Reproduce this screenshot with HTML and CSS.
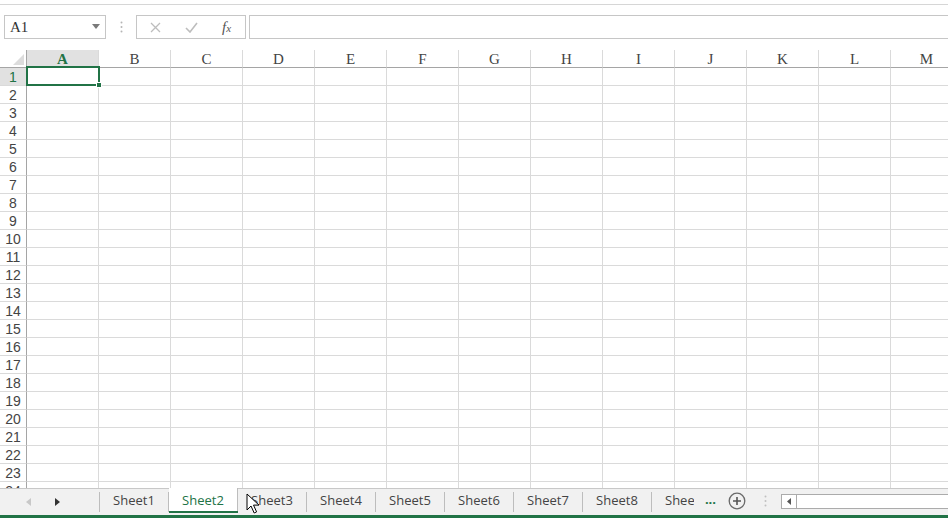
FILE: index.html
```html
<!DOCTYPE html>
<html lang="en">
<head>
  <meta charset="UTF-8">
  <title>Book1 - Sheet2</title>
  <link rel="stylesheet" href="styles.css">
</head>
<body>

  <div class="app">
    <div class="ribbon-edge"></div>

    <div class="formula-bar">
      <div class="name-box">
        <span>A1</span>
        <svg class="caret" width="8" height="5" viewBox="0 0 8 5"><path d="M0 0h8L4 5z" fill="#7a7a7a"/></svg>
      </div>
      <div class="grip">
        <svg width="3" height="12" viewBox="0 0 3 12"><circle cx="1.5" cy="1.5" r="1" fill="#b5b5b5"/><circle cx="1.5" cy="6" r="1" fill="#b5b5b5"/><circle cx="1.5" cy="10.5" r="1" fill="#b5b5b5"/></svg>
      </div>
      <div class="fx-buttons">
        <svg width="11" height="11" viewBox="0 0 11 11"><path d="M1 1l9 9M10 1l-9 9" stroke="#bdbdbd" stroke-width="1.3"/></svg>
        <svg width="13" height="11" viewBox="0 0 13 11"><path d="M1 6l4 4 7-9" stroke="#bdbdbd" stroke-width="1.6" fill="none"/></svg>
        <span class="fx">f<small>x</small></span>
      </div>
      <div class="formula-input"></div>
    </div>

    <div class="sheet">
      <div class="grid" id="grid"></div>
      <div class="selection"><span class="handle"></span></div>
    </div>

    <div class="tabs">
      <div class="tab-nav">
        <svg width="5" height="8" viewBox="0 0 5 8"><path d="M5 0v8L0 4z" fill="#c8c8c8"/></svg>
        <svg width="5" height="8" viewBox="0 0 5 8"><path d="M0 0v8l5-4z" fill="#333"/></svg>
      </div>
      <div class="tab">Sheet1</div>
      <div class="tab active">Sheet2</div>
      <div class="tab">Sheet3</div>
      <div class="tab">Sheet4</div>
      <div class="tab">Sheet5</div>
      <div class="tab">Sheet6</div>
      <div class="tab">Sheet7</div>
      <div class="tab">Sheet8</div>
      <div class="tab cut">Sheet9</div>
      <div class="more">...</div>
      <div class="add">
        <svg width="18" height="18" viewBox="0 0 18 18"><circle cx="9" cy="9" r="7.8" fill="none" stroke="#6a6a6a" stroke-width="1.3"/><path d="M9 5v8M5 9h8" stroke="#555" stroke-width="1.6"/></svg>
      </div>
      <div class="grip small">
        <svg width="3" height="12" viewBox="0 0 3 12"><circle cx="1.5" cy="1.5" r="1" fill="#c0c0c0"/><circle cx="1.5" cy="6" r="1" fill="#c0c0c0"/><circle cx="1.5" cy="10.5" r="1" fill="#c0c0c0"/></svg>
      </div>
      <div class="hscroll">
        <div class="scroll-btn">
          <svg width="4" height="7" viewBox="0 0 4 7"><path d="M4 0v7L0 3.5z" fill="#555"/></svg>
        </div>
        <div class="scroll-thumb"></div>
      </div>

      <svg class="pointer" width="13" height="22" viewBox="0 0 13 22"><path d="M1 1v16l4-4 3.2 7 2.4-1.1-3.1-6.8H13z" fill="#fff" stroke="#000" stroke-width="1" stroke-linejoin="round"/></svg>
    </div>

    <div class="status"></div>
  </div>

  <script>
    const cols = "ABCDEFGHIJKLM".split("");
    const grid = document.getElementById("grid");

    function addCell(cls, text) {
      const div = document.createElement("div");
      div.className = cls;
      if (text) div.textContent = text;
      grid.appendChild(div);
    }

    addCell("corner");
    cols.forEach((c, i) => addCell(i === 0 ? "col-head on" : "col-head", c));

    for (let r = 1; r <= 25; r++) {
      addCell(r === 1 ? "row-head on" : "row-head", String(r));
      cols.forEach(() => addCell("cell"));
    }
  </script>

</body>
</html>
```

FILE: styles.css
```css
:root {
  --green: #217346;
  --line: #dadada;
  --head-line: #a5a5a5;
  --text: #444;
}

* {
  box-sizing: border-box;
}

body {
  margin: 0;
  background: #fff;
  font-family: 'Open Sans', 'Noto Sans', sans-serif;
  overflow: hidden;
}

.app {
  width: 948px;
  height: 518px;
  display: flex;
  flex-direction: column;
  overflow: hidden;
}

.ribbon-edge {
  height: 5px;
  border-bottom: 1px solid #d6d6d6;
  flex-shrink: 0;
}

/* formula bar */

.formula-bar {
  display: flex;
  align-items: center;
  height: 24px;
  margin: 10px 0 11px 4px;
  flex-shrink: 0;
}

.name-box {
  width: 102px;
  height: 24px;
  border: 1px solid #c6c6c6;
  display: flex;
  align-items: center;
  justify-content: space-between;
  padding: 0 5px 0 5px;
  font-family: 'Liberation Serif', serif;
  font-size: 15px;
  color: #333;
}

.caret {
  margin-top: -2px;
}

.grip {
  width: 30px;
  display: flex;
  align-items: center;
  justify-content: center;
}

.fx-buttons {
  width: 110px;
  height: 24px;
  border: 1px solid #c6c6c6;
  display: flex;
  align-items: center;
  gap: 24px;
  padding-left: 13px;
}

.fx {
  font-family: 'Liberation Serif', serif;
  font-style: italic;
  font-size: 15px;
  color: #555;
}

.fx small {
  font-size: 11px;
}

.formula-input {
  flex: 1;
  height: 24px;
  margin-left: 3px;
  border: 1px solid #c6c6c6;
  border-right: none;
}

/* grid */

.sheet {
  position: relative;
  height: 438px;
  overflow: hidden;
  flex-shrink: 0;
}

.grid {
  display: grid;
  grid-template-columns: 27px repeat(13, 72px);
  grid-auto-rows: 18px;
  width: 963px;
}

.corner {
  border-right: 1px solid var(--head-line);
  border-bottom: 1px solid var(--head-line);
  position: relative;
}

.corner::after {
  content: "";
  position: absolute;
  right: 2px;
  bottom: 2px;
  border-style: solid;
  border-width: 0 0 11px 11px;
  border-color: transparent transparent #dcdcdc transparent;
}

.col-head {
  border-right: 1px solid var(--line);
  border-bottom: 1px solid var(--head-line);
  text-align: center;
  font-family: 'Liberation Serif', serif;
  font-size: 15px;
  line-height: 19px;
  color: var(--text);
}

.row-head {
  border-right: 1px solid var(--head-line);
  border-bottom: 1px solid var(--line);
  text-align: center;
  font-family: 'Liberation Sans', sans-serif;
  font-size: 14px;
  line-height: 19px;
  color: var(--text);
}

.col-head.on,
.row-head.on {
  background: #e1e1e1;
  color: var(--green);
}

.col-head.on {
  font-weight: bold;
}

.cell {
  border-right: 1px solid var(--line);
  border-bottom: 1px solid var(--line);
}

.selection {
  position: absolute;
  left: 26px;
  top: 16px;
  width: 74px;
  height: 20px;
  border: 2px solid var(--green);
}

.handle {
  position: absolute;
  right: -4px;
  bottom: -4px;
  width: 6px;
  height: 6px;
  background: var(--green);
  border: 1px solid #fff;
}

/* sheet tabs */

.tabs {
  position: relative;
  height: 27px;
  flex-shrink: 0;
  display: flex;
  align-items: stretch;
  background: #f1f1f1;
  border-top: 1px solid #c8c8c8;
  font-size: 13px;
  color: var(--text);
}

.tab-nav {
  width: 100px;
  display: flex;
  align-items: center;
  gap: 24px;
  padding-left: 26px;
  position: relative;
}

.tab-nav::after,
.tab::after {
  content: "";
  position: absolute;
  right: 0;
  top: 3px;
  bottom: 3px;
  width: 1px;
  background: #bdbdbd;
}

.tab {
  position: relative;
  width: 69px;
  display: flex;
  align-items: center;
  justify-content: center;
  padding: 0 1px 4px 0;
  white-space: nowrap;
}

.tab.active {
  background: #fff;
  color: var(--green);
  margin: -1px 0 2px;
  padding-bottom: 0;
  border-bottom: 2px solid var(--green);
}

.tab.active::after {
  top: 0;
  bottom: 0;
}

.tab.cut {
  width: 42px;
  justify-content: flex-start;
  padding-left: 13px;
  overflow: hidden;
}

.tab.cut::after {
  display: none;
}

.more {
  width: 22px;
  display: flex;
  align-items: center;
  justify-content: flex-end;
  color: var(--green);
  font-weight: bold;
  padding-bottom: 6px;
}

.add {
  width: 42px;
  display: flex;
  align-items: center;
  justify-content: center;
  padding-bottom: 2px;
}

.grip.small {
  width: 14px;
  padding-bottom: 2px;
}

.hscroll {
  flex: 1;
  margin: 5px 0 6px 9px;
  border: 1px solid #ababab;
  border-right: none;
  background: #fff;
  display: flex;
}

.scroll-btn {
  width: 15px;
  border-right: 1px solid #ababab;
  display: flex;
  align-items: center;
  justify-content: center;
}

.scroll-thumb {
  flex: 1;
}

.pointer {
  position: absolute;
  left: 246px;
  top: 4px;
}

.status {
  height: 3px;
  background: var(--green);
  flex-shrink: 0;
}
```
